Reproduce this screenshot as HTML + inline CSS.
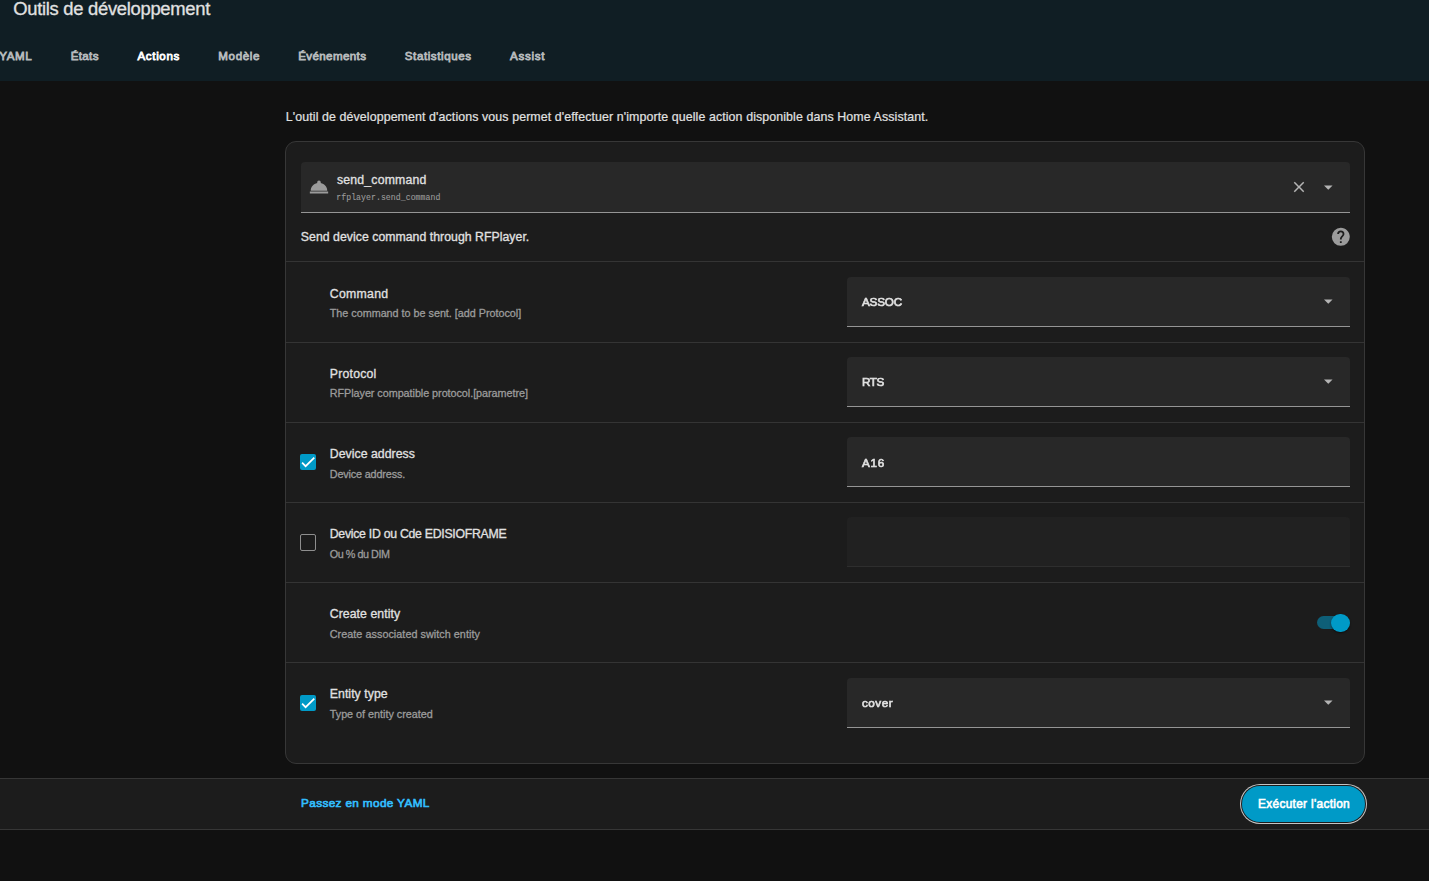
<!DOCTYPE html>
<html lang="fr">
<head>
<meta charset="utf-8">
<title>Outils de développement</title>
<style>
html,body{margin:0;padding:0;background:#111111;}
body{width:1429px;height:881px;position:relative;overflow:hidden;font-family:"Liberation Sans",sans-serif;color:#e1e1e1;}
.abs{position:absolute;box-sizing:border-box;}
.t{position:absolute;white-space:nowrap;line-height:80px;height:80px;display:block;}
#header{left:0;top:0;width:1429px;height:81px;background:#101e24;}
#card{left:285px;top:141px;width:1080px;height:623px;background:#1c1c1c;border:1px solid #373737;border-radius:11px;}
.div{left:286px;width:1078px;height:1px;background:#343434;}
.field{background:#282828;border-bottom:1px solid #959595;border-radius:4px 4px 0 0;}
.field.dis{background:#212121;border-bottom-color:#2e2e2e;}
#bar{left:0;top:778px;width:1429px;height:52px;background:#1c1c1c;border-top:1px solid #363636;border-bottom:1px solid #363636;}
#button{left:1242px;top:786px;width:122.8px;height:36px;border-radius:18px;background:#009ac7;box-shadow:0 0 0 1px #1c1c1c,0 0 0 2px #c4c4c4;}
.cb{width:16px;height:16px;border-radius:2px;}
.cb.on{background:#009ac7;}
.cb.off{border:1.3px solid #8e8e8e;height:17px;}
svg{position:absolute;display:block;overflow:visible}
#track{left:1317px;top:616px;width:30px;height:13px;border-radius:6.5px;background:#0e5f78;}
#knob{left:1331.3px;top:613.7px;width:18.7px;height:18.7px;border-radius:50%;background:#009ac7;box-shadow:0 1px 2px rgba(0,0,0,.5);}
#v1,#v2,#v3,#v6{will-change:transform}
#title{left:13.25px;top:-31.13px;font-size:18.41px;color:#e1e1e1;font-family:"Liberation Sans", sans-serif;letter-spacing:-0.297px;-webkit-text-stroke:0.3px}
#t0{right:1396.6px;top:16.19px;font-size:11.58px;color:#b6babc;font-family:"Liberation Sans", sans-serif;letter-spacing:0.623px;-webkit-text-stroke:0.8px}
#t1{left:70.70px;top:16.19px;font-size:11.58px;color:#b6babc;font-family:"Liberation Sans", sans-serif;letter-spacing:0.352px;-webkit-text-stroke:0.8px}
#t2{left:137.50px;top:16.19px;font-size:11.58px;color:#ffffff;font-family:"Liberation Sans", sans-serif;letter-spacing:0.639px;-webkit-text-stroke:0.8px}
#t3{left:218.30px;top:16.19px;font-size:11.58px;color:#b6babc;font-family:"Liberation Sans", sans-serif;letter-spacing:0.623px;-webkit-text-stroke:0.8px}
#t4{left:298.20px;top:16.19px;font-size:11.58px;color:#b6babc;font-family:"Liberation Sans", sans-serif;letter-spacing:0.382px;-webkit-text-stroke:0.8px}
#t5{left:404.80px;top:16.19px;font-size:11.58px;color:#b6babc;font-family:"Liberation Sans", sans-serif;letter-spacing:0.576px;-webkit-text-stroke:0.8px}
#t6{left:510.00px;top:16.19px;font-size:11.58px;color:#b6babc;font-family:"Liberation Sans", sans-serif;letter-spacing:0.722px;-webkit-text-stroke:0.8px}
#intro{left:285.80px;top:77.10px;font-size:12.4px;color:#e1e1e1;font-family:"Liberation Sans", sans-serif;letter-spacing:0.099px;-webkit-text-stroke:0.2px}
#svc{left:337.05px;top:140.10px;font-size:12.27px;color:#e1e1e1;font-family:"Liberation Sans", sans-serif;letter-spacing:0.174px;-webkit-text-stroke:0.3px}
#svc2{left:336.25px;top:158.01px;font-size:8.2px;color:#9b9b9b;font-family:"Liberation Mono", "DejaVu Sans Mono", monospace;letter-spacing:0.046px;-webkit-text-stroke:0.1px}
#sdesc{left:300.85px;top:197.20px;font-size:12.27px;color:#e1e1e1;font-family:"Liberation Sans", sans-serif;letter-spacing:0.038px;-webkit-text-stroke:0.3px}
#l1{left:329.75px;top:254.20px;font-size:12.27px;color:#e1e1e1;font-family:"Liberation Sans", sans-serif;letter-spacing:0.301px;-webkit-text-stroke:0.3px}
#d1{left:329.75px;top:273.21px;font-size:10.8px;color:#9b9b9b;font-family:"Liberation Sans", sans-serif;letter-spacing:-0.015px;-webkit-text-stroke:0.3px}
#l2{left:329.75px;top:334.20px;font-size:12.27px;color:#e1e1e1;font-family:"Liberation Sans", sans-serif;letter-spacing:0.229px;-webkit-text-stroke:0.3px}
#d2{left:329.75px;top:353.11px;font-size:10.8px;color:#9b9b9b;font-family:"Liberation Sans", sans-serif;letter-spacing:-0.042px;-webkit-text-stroke:0.3px}
#l3{left:329.75px;top:414.20px;font-size:12.27px;color:#e1e1e1;font-family:"Liberation Sans", sans-serif;letter-spacing:0.050px;-webkit-text-stroke:0.3px}
#d3{left:329.75px;top:433.71px;font-size:10.8px;color:#9b9b9b;font-family:"Liberation Sans", sans-serif;letter-spacing:-0.144px;-webkit-text-stroke:0.3px}
#l4{left:329.75px;top:494.20px;font-size:12.27px;color:#e1e1e1;font-family:"Liberation Sans", sans-serif;letter-spacing:-0.265px;-webkit-text-stroke:0.3px}
#d4{left:329.75px;top:514.11px;font-size:10.8px;color:#9b9b9b;font-family:"Liberation Sans", sans-serif;letter-spacing:-0.461px;-webkit-text-stroke:0.3px}
#l5{left:329.75px;top:574.20px;font-size:12.27px;color:#e1e1e1;font-family:"Liberation Sans", sans-serif;letter-spacing:0.063px;-webkit-text-stroke:0.3px}
#d5{left:329.75px;top:594.11px;font-size:10.8px;color:#9b9b9b;font-family:"Liberation Sans", sans-serif;letter-spacing:0.042px;-webkit-text-stroke:0.3px}
#l6{left:329.75px;top:654.20px;font-size:12.27px;color:#e1e1e1;font-family:"Liberation Sans", sans-serif;letter-spacing:0.062px;-webkit-text-stroke:0.3px}
#d6{left:329.75px;top:674.41px;font-size:10.8px;color:#9b9b9b;font-family:"Liberation Sans", sans-serif;letter-spacing:-0.011px;-webkit-text-stroke:0.3px}
#v1{left:861.83px;top:261.72px;font-size:11.69px;color:#e1e1e1;font-family:"Liberation Sans", sans-serif;letter-spacing:-0.193px;-webkit-text-stroke:0.65px}
#v2{left:861.83px;top:341.72px;font-size:11.69px;color:#e1e1e1;font-family:"Liberation Sans", sans-serif;letter-spacing:-0.411px;-webkit-text-stroke:0.65px}
#v3{left:861.83px;top:422.62px;font-size:11.69px;color:#e1e1e1;font-family:"Liberation Sans", sans-serif;letter-spacing:0.677px;-webkit-text-stroke:0.65px}
#v6{left:861.83px;top:662.92px;font-size:11.69px;color:#e1e1e1;font-family:"Liberation Sans", sans-serif;letter-spacing:0.489px;-webkit-text-stroke:0.65px}
#yaml{left:301.12px;top:763.09px;font-size:11.79px;color:#33bfff;font-family:"Liberation Sans", sans-serif;letter-spacing:0.345px;-webkit-text-stroke:0.65px}
#btn{left:1258.10px;top:763.89px;font-size:11.86px;color:#ffffff;font-family:"Liberation Sans", sans-serif;letter-spacing:0.309px;-webkit-text-stroke:0.6px}
</style>
</head>
<body>
<div class="abs" id="header"></div>
<div class="abs" id="card"></div>

<div class="abs field" style="left:301px;top:162px;width:1049px;height:51px"></div>
<div class="abs div" style="top:261px"></div>
<div class="abs div" style="top:342px"></div>
<div class="abs div" style="top:422px"></div>
<div class="abs div" style="top:502px"></div>
<div class="abs div" style="top:582px"></div>
<div class="abs div" style="top:662px"></div>

<div class="abs field" style="left:847px;top:277px;width:503px;height:50px"></div>
<div class="abs field" style="left:847px;top:357px;width:503px;height:50px"></div>
<div class="abs field" style="left:847px;top:437px;width:503px;height:50px"></div>
<div class="abs field dis" style="left:847px;top:517px;width:503px;height:50px"></div>
<div class="abs field" style="left:847px;top:678px;width:503px;height:50px"></div>

<!-- service icon (bell) -->
<svg style="left:307.5px;top:175.5px" width="22" height="22" viewBox="0 0 24 24"><path fill="#9b9b9b" d="M12,5A2,2 0 0,1 14,7C14,7.24 13.96,7.47 13.88,7.69C17.95,8.5 21,11.91 21,16H3C3,11.91 6.05,8.5 10.12,7.69C10.04,7.47 10,7.24 10,7A2,2 0 0,1 12,5M22,19H2V17H22V19Z"/></svg>
<!-- clear X -->
<svg style="left:1290px;top:178px" width="18" height="18" viewBox="0 0 24 24"><path fill="#b4b4b4" d="M19,6.41L17.59,5L12,10.59L6.41,5L5,6.41L10.59,12L5,17.59L6.41,19L12,13.41L17.59,19L19,17.59L13.41,12L19,6.41Z"/></svg>
<!-- dropdown arrows -->
<svg style="left:1318px;top:176.6px" width="20.6" height="20.6" viewBox="0 0 24 24"><path fill="#b4b4b4" d="M7,10L12,15L17,10H7Z"/></svg>
<svg style="left:1318px;top:291.1px" width="20.6" height="20.6" viewBox="0 0 24 24"><path fill="#b4b4b4" d="M7,10L12,15L17,10H7Z"/></svg>
<svg style="left:1318px;top:371.1px" width="20.6" height="20.6" viewBox="0 0 24 24"><path fill="#b4b4b4" d="M7,10L12,15L17,10H7Z"/></svg>
<svg style="left:1318px;top:692.1px" width="20.6" height="20.6" viewBox="0 0 24 24"><path fill="#b4b4b4" d="M7,10L12,15L17,10H7Z"/></svg>
<!-- help icon -->
<svg style="left:1330.2px;top:226.2px" width="21.6" height="21.6" viewBox="0 0 24 24"><path fill="#9b9b9b" d="M15.07,11.25L14.17,12.17C13.45,12.89 13,13.5 13,15H11V14.5C11,13.39 11.45,12.39 12.17,11.67L13.41,10.41C13.78,10.05 14,9.55 14,9C14,7.89 13.1,7 12,7A2,2 0 0,0 10,9H8A4,4 0 0,1 12,5A4,4 0 0,1 16,9C16,9.88 15.64,10.67 15.07,11.25M13,19H11V17H13M12,2A10,10 0 0,0 2,12A10,10 0 0,0 12,22A10,10 0 0,0 22,12C22,6.47 17.5,2 12,2Z"/></svg>

<!-- checkboxes -->
<div class="abs cb on" style="left:300px;top:454px"></div>
<svg style="left:300px;top:454px" width="16" height="16" viewBox="0 0 16 16"><path fill="none" stroke="#ffffff" stroke-width="1.7" d="M2.1,8.6 L5.6,12.2 L14.3,3.7"/></svg>
<div class="abs cb off" style="left:300px;top:534px"></div>
<div class="abs cb on" style="left:300px;top:695px"></div>
<svg style="left:300px;top:695px" width="16" height="16" viewBox="0 0 16 16"><path fill="none" stroke="#ffffff" stroke-width="1.7" d="M2.1,8.6 L5.6,12.2 L14.3,3.7"/></svg>

<!-- switch -->
<div class="abs" id="track"></div>
<div class="abs" id="knob"></div>

<div class="abs" id="bar"></div>
<div class="abs" id="button"></div>

<span class="t" id="title">Outils de développement</span>
<span class="t" id="t0">YAML</span>
<span class="t" id="t1">États</span>
<span class="t" id="t2">Actions</span>
<span class="t" id="t3">Modèle</span>
<span class="t" id="t4">Événements</span>
<span class="t" id="t5">Statistiques</span>
<span class="t" id="t6">Assist</span>
<span class="t" id="intro">L'outil de développement d'actions vous permet d'effectuer n'importe quelle action disponible dans Home Assistant.</span>
<span class="t" id="svc">send_command</span>
<span class="t" id="svc2">rfplayer.send_command</span>
<span class="t" id="sdesc">Send device command through RFPlayer.</span>
<span class="t" id="l1">Command</span>
<span class="t" id="d1">The command to be sent. [add Protocol]</span>
<span class="t" id="l2">Protocol</span>
<span class="t" id="d2">RFPlayer compatible protocol.[parametre]</span>
<span class="t" id="l3">Device address</span>
<span class="t" id="d3">Device address.</span>
<span class="t" id="l4">Device ID ou Cde EDISIOFRAME</span>
<span class="t" id="d4">Ou % du DIM</span>
<span class="t" id="l5">Create entity</span>
<span class="t" id="d5">Create associated switch entity</span>
<span class="t" id="l6">Entity type</span>
<span class="t" id="d6">Type of entity created</span>
<span class="t" id="v1">ASSOC</span>
<span class="t" id="v2">RTS</span>
<span class="t" id="v3">A16</span>
<span class="t" id="v6">cover</span>
<span class="t" id="yaml">Passez en mode YAML</span>
<span class="t" id="btn">Exécuter l'action</span>
</body>
</html>
